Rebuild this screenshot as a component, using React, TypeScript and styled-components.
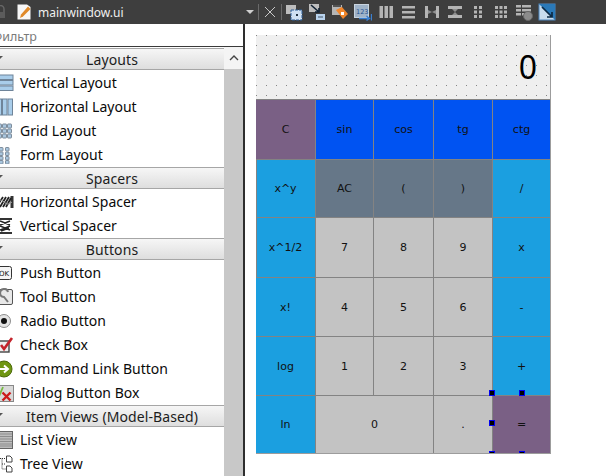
import React from "react";
import styled, { createGlobalStyle } from "styled-components";

const Global = createGlobalStyle`
  html, body { margin: 0; padding: 0; background: #fff; }
  #root { width: 606px; height: 476px; }
`;

const Page = styled.div`
  width: 606px;
  height: 476px;
  overflow: hidden;
  display: flex;
  flex-direction: column;
  font-family: "Noto Sans", "Open Sans", sans-serif;
`;

const Toolbar = styled.header`
  flex: 0 0 24px;
  height: 24px;
  background: #3e3e3e;
  display: flex;
  align-items: center;
  color: #f0f0f0;
`;

const Lock = styled.svg`
  width: 7px;
  height: 14px;
  margin-right: 10px;
`;

const Title = styled.span`
  font-size: 12px;
  margin-left: 7px;
  width: 208px;
  white-space: nowrap;
`;

const Caret = styled.span`
  width: 0;
  height: 0;
  border-left: 4px solid transparent;
  border-right: 4px solid transparent;
  border-top: 4px solid #cfcfcf;
`;

const ToolSep = styled.span<{ $left: number; $right: number }>`
  width: 1px;
  height: 16px;
  background: #6a6a6a;
  margin: 0 ${(p) => p.$right}px 0 ${(p) => p.$left}px;
`;

const CloseIcon = styled.svg`
  width: 12px;
  height: 12px;
  flex: none;
`;

const ToolIcon = styled.svg`
  width: 18px;
  height: 18px;
  flex: none;
  margin-right: 5px;
`;

const Main = styled.main`
  flex: 1;
  min-height: 0;
  display: flex;
`;

const Sidebar = styled.aside`
  flex: 0 0 245px;
  border-right: 2px solid #2e2e2e;
  box-sizing: border-box;
  display: flex;
  flex-direction: column;
  overflow: hidden;
`;

const Filter = styled.div`
  flex: 0 0 23px;
  height: 23px;
  min-height: 0;
  overflow: hidden;
  box-sizing: border-box;
  border-bottom: 1px solid #3a3a3a;
  font-size: 12.5px;
  line-height: 25px;
  color: #7a7a7a;
  margin-left: -8px;
  white-space: nowrap;
`;

const BoxRow = styled.div`
  flex: 1;
  min-height: 0;
  display: flex;
`;

const List = styled.div`
  flex: 0 0 224px;
  overflow: hidden;
  padding-top: 1px;
`;

const Scrollbar = styled.div`
  flex: 0 0 19px;
  background: #c8c8c8;
  display: flex;
  flex-direction: column;
`;

const ScrollUp = styled.div`
  flex: 0 0 22px;
  background: #f4f4f4;
  display: flex;
  align-items: center;
  justify-content: center;
`;

const SectionHeader = styled.div`
  position: relative;
  height: 22px;
  box-sizing: border-box;
  border-top: 1px solid #a6a6a6;
  border-bottom: 1px solid #a6a6a6;
  background: linear-gradient(#f6f6f6, #dedede);
  text-align: center;
  font-size: 14px;
  letter-spacing: 0.1px;
  line-height: 21px;
  color: #1c1c1c;
  white-space: nowrap;
  &::before {
    content: "";
    position: absolute;
    left: -3px;
    top: 7px;
    border-left: 3px solid transparent;
    border-right: 3px solid transparent;
    border-top: 3px solid #555;
  }
`;

const Section = styled.section`
  margin-bottom: 1px;
`;

const Item = styled.div`
  height: 24px;
  display: flex;
  align-items: center;
  font-size: 14px;
  line-height: 24px;
  color: #0a0a0a;
  white-space: nowrap;
  padding-top: 1px;
  box-sizing: border-box;
`;

const ItemIcon = styled.svg`
  width: 18px;
  height: 18px;
  flex: none;
  margin-left: -4px;
  margin-right: 6px;
`;

const Canvas = styled.div`
  flex: 1;
  background: #fff;
  padding: 11px 0 0 11px;
`;

const Form = styled.div`
  position: relative;
  width: 295px;
  height: 419px;
  border-right: 1px solid #9c9c9c;
  border-bottom: 1px solid #9c9c9c;
  box-sizing: border-box;
  display: flex;
  flex-direction: column;
`;

const Display = styled.div`
  flex: 0 0 63px;
  box-sizing: border-box;
  background-color: #efefef;
  background-image: radial-gradient(circle at 0.5px 0.5px, #858585 0.5px, transparent 0.5px);
  background-size: 10px 10px;
  text-align: right;
  padding-right: 13px;
  font-size: 32px;
  font-weight: 400;
  line-height: 64px;
  color: #000;
`;

const Keys = styled.div`
  display: grid;
  grid-template-columns: 59px 57px 59px 58px 1fr;
  grid-template-rows: 59px 57px 59px 58px 58px 1fr;
  gap: 1px;
  flex: 1;
  background: #838383;
  padding-top: 1px;
`;

const palette = {
  purple: "#7a6085",
  blue: "#0053f2",
  sky: "#1b9fe0",
  slate: "#667788",
  grey: "#c3c3c3",
};

const Key = styled.button<{ $tone: keyof typeof palette; $span?: number; $edge?: boolean }>`
  all: unset;
  display: flex;
  align-items: center;
  justify-content: center;
  background: ${(p) => palette[p.$tone]};
  grid-column: span ${(p) => p.$span ?? 1};
  font-family: "DejaVu Sans", sans-serif;
  font-size: 11px;
  color: #111;
  box-shadow: ${(p) => (p.$edge ? "inset 1px 0 0 #838383" : "none")};
`;

const Selection = styled.div`
  position: absolute;
  inset: 0;
  overflow: hidden;
  pointer-events: none;
`;

const Handle = styled.span<{ $x: number; $y: number }>`
  position: absolute;
  left: ${(p) => p.$x}px;
  top: ${(p) => p.$y}px;
  width: 6px;
  height: 6px;
  box-sizing: border-box;
  background: #000;
  border: 1px solid #0000f0;
`;

const keys: { t: string; c: keyof typeof palette; s?: number; e?: boolean }[] = [
  { t: "C", c: "purple" }, { t: "sin", c: "blue" }, { t: "cos", c: "blue" }, { t: "tg", c: "blue" }, { t: "ctg", c: "blue" },
  { t: "x^y", c: "sky", e: true }, { t: "AC", c: "slate" }, { t: "(", c: "slate" }, { t: ")", c: "slate" }, { t: "/", c: "sky" },
  { t: "x^1/2", c: "sky", e: true }, { t: "7", c: "grey" }, { t: "8", c: "grey" }, { t: "9", c: "grey" }, { t: "x", c: "sky" },
  { t: "x!", c: "sky" }, { t: "4", c: "grey" }, { t: "5", c: "grey" }, { t: "6", c: "grey" }, { t: "-", c: "sky" },
  { t: "log", c: "sky" }, { t: "1", c: "grey" }, { t: "2", c: "grey" }, { t: "3", c: "grey" }, { t: "+", c: "sky" },
  { t: "ln", c: "sky" }, { t: "0", c: "grey", s: 2 }, { t: ".", c: "grey" }, { t: "=", c: "purple" },
];

const handles = [
  [233, 355], [263, 355], [233, 385], [233, 416], [263, 416],
];

/* ---------- palette icons ---------- */
const V = { viewBox: "0 0 18 18" };

const IconVLayout = () => (
  <ItemIcon {...V}>
    {[1, 6.5, 12].map((y) => (
      <rect key={y} x="1" y={y} width="16" height="4.5" fill="#a9cdea" stroke="#6f8499" />
    ))}
  </ItemIcon>
);
const IconHLayout = () => (
  <ItemIcon {...V}>
    {[1, 6.5, 12].map((x) => (
      <rect key={x} x={x} y="1" width="4.5" height="16" fill="#a9cdea" stroke="#6f8499" />
    ))}
  </ItemIcon>
);
const cells = (cols: number[], rows: number[], s: number) =>
  cols.flatMap((x) =>
    rows.map((y) => <rect key={`${x}-${y}`} x={x} y={y} width={s} height={s} rx="0.6" fill="#a9c6de" stroke="#7d8c9b" />)
  );
const IconGrid = () => <ItemIcon {...V}>{cells([1.5, 6.5, 11.5], [2, 7, 12], 4)}</ItemIcon>;
const IconForm = () => <ItemIcon {...V}>{cells([3.5, 9.5], [1.5, 6, 10.5, 14.5], 3.5)}</ItemIcon>;
const IconHSpacer = () => (
  <ItemIcon {...V}>
    <rect x="14.5" y="3" width="3" height="12" fill="#333" />
    <path d="M1 13 L7 4 M4 14 L10 4 M7 14 L13 4 M10 14 L15 5" stroke="#222" strokeWidth="1.8" fill="none" />
    <path d="M0 9 Q4 5 8 9 T16 9" stroke="#999" fill="none" />
  </ItemIcon>
);
const IconVSpacer = () => (
  <ItemIcon {...V}>
    <rect x="3" y="1" width="13" height="2" fill="#333" />
    <rect x="3" y="15" width="13" height="2" fill="#333" />
    <path d="M4 4 L14 8 M4 8 L14 4 M4 9 L14 13 M4 13 L14 9 M5 14 L13 11" stroke="#222" strokeWidth="1.6" fill="none" />
  </ItemIcon>
);
const IconPush = () => (
  <ItemIcon {...V}>
    <rect x="0.5" y="2.5" width="15" height="13" rx="2" fill="#f4f4f4" stroke="#333" />
    <text x="8" y="12" fontSize="7" textAnchor="middle" fontFamily="DejaVu Sans" fill="#111">OK</text>
  </ItemIcon>
);
const IconTool = () => (
  <ItemIcon {...V}>
    <rect x="2.5" y="1.5" width="14" height="15" rx="1.5" fill="#e8e8e8" stroke="#555" />
    <path d="M12 4 A4 4 0 1 0 8 9 L12 14" stroke="#777" strokeWidth="2" fill="none" />
  </ItemIcon>
);
const IconRadio = () => (
  <ItemIcon {...V}>
    <circle cx="8" cy="9" r="6.5" fill="#e4e4e4" stroke="#8e8e8e" />
    <circle cx="8" cy="9" r="3" fill="#111" />
  </ItemIcon>
);
const IconCheck = () => (
  <ItemIcon {...V}>
    <rect x="2" y="5" width="11" height="11" fill="#eee" stroke="#444" strokeWidth="1.4" />
    <path d="M5 9 L8 13 L16 2" stroke="#c4232b" strokeWidth="2.6" fill="none" />
  </ItemIcon>
);
const IconCommand = () => (
  <ItemIcon {...V}>
    <circle cx="8" cy="9" r="8" fill="#6f9612" stroke="#4c6a0a" />
    <path d="M4 9 H11 M8 5.5 L12 9 L8 12.5" stroke="#fff" strokeWidth="2" fill="none" />
  </ItemIcon>
);
const IconDialog = () => (
  <ItemIcon {...V}>
    <rect x="0.5" y="1.5" width="17" height="16" fill="#d9d9d9" stroke="#888" />
    <path d="M2 7 L4 10 L7 3" stroke="#77bb44" strokeWidth="1.8" fill="none" />
    <path d="M6.5 8.5 L14.5 16.5 M14.5 8.5 L6.5 16.5" stroke="#cc1a1a" strokeWidth="2.4" />
  </ItemIcon>
);
const IconList = () => (
  <ItemIcon {...V}>
    <rect x="0.5" y="0.5" width="16" height="17" fill="#bdbdbd" stroke="#666" />
    {[3, 5.5, 8, 10.5, 13, 15].map((y) => (
      <path key={y} d={`M1 ${y} H16`} stroke="#8d8d8d" />
    ))}
  </ItemIcon>
);
const IconTree = () => (
  <ItemIcon {...V}>
    <path d="M4 3.5 H9 M6 3.5 V14 H10 M6 9 H10" stroke="#333" strokeDasharray="1 1" fill="none" />
    <path d="M10.5 1 H14 L16 3 V7 H10.5 Z M10.5 11 H14 L16 13 V17 H10.5 Z" fill="#fff" stroke="#444" />
  </ItemIcon>
);

const sections: { title: string; items: [React.ComponentType, string][] }[] = [
  { title: "Layouts", items: [[IconVLayout, "Vertical Layout"], [IconHLayout, "Horizontal Layout"], [IconGrid, "Grid Layout"], [IconForm, "Form Layout"]] },
  { title: "Spacers", items: [[IconHSpacer, "Horizontal Spacer"], [IconVSpacer, "Vertical Spacer"]] },
  { title: "Buttons", items: [[IconPush, "Push Button"], [IconTool, "Tool Button"], [IconRadio, "Radio Button"], [IconCheck, "Check Box"], [IconCommand, "Command Link Button"], [IconDialog, "Dialog Button Box"]] },
  { title: "Item Views (Model-Based)", items: [[IconList, "List View"], [IconTree, "Tree View"]] },
];

const G = "#b4b4b4";
const App = () => (
  <Page>
    <Global />
    <Toolbar>
      <Lock viewBox="0 0 7 14">
        <path d="M-3 7 V4 A3.5 3.5 0 0 1 4 4 V7" stroke="#666" strokeWidth="1.5" fill="none" />
        <rect x="-4" y="7" width="9" height="6" fill="#5c5c5c" />
      </Lock>
      <svg width="14" height="16" viewBox="0 0 14 16">
        <path d="M0.5 0.5 H10 L13.5 3 V15.5 H0.5 Z" fill="#f7f7f7" />
        <path d="M3 14 L4 10.5 L11 2.5 L13.5 5 L6 12.5 Z" fill="#e08a2a" />
      </svg>
      <Title>mainwindow.ui</Title>
      <Caret />
      <ToolSep $left={4} $right={5} />
      <CloseIcon viewBox="0 0 12 12">
        <path d="M1 1 L11 11 M11 1 L1 11" stroke="#c8c8c8" strokeWidth="1" />
      </CloseIcon>
      <ToolSep $left={5} $right={3} />
      <ToolIcon viewBox="0 0 18 18">
        <rect x="1" y="2" width="10" height="9" fill="#bdbdbd" />
        <rect x="6" y="7" width="11" height="10" fill="#cfe0f2" stroke="#2f5f97" strokeDasharray="3 1" />
        <rect x="11" y="11" width="2" height="2" fill="#234" />
      </ToolIcon>
      <ToolIcon viewBox="0 0 18 18">
        <rect x="1" y="1" width="10" height="8" fill="#bdbdbd" />
        <path d="M3 2 L11 9 M11 5 V9 H7" stroke="#123" strokeWidth="1.6" fill="none" />
        <rect x="8" y="11" width="9" height="6" fill="#b8d2ec" />
        <path d="M10 14 H15" stroke="#456" />
      </ToolIcon>
      <ToolIcon viewBox="0 0 18 18">
        <rect x="1" y="2" width="10" height="10" fill="#b5b5b5" />
        <path d="M2 3 H10" stroke="#333" strokeWidth="1.5" />
        <path d="M5 7 L11 4 L17 11 L12 16 Z" fill="#f1862b" />
        <rect x="10" y="9" width="3" height="3" fill="#fff" />
      </ToolIcon>
      <ToolIcon viewBox="0 0 18 18">
        <rect x="0.5" y="1.5" width="14" height="13" fill="#9fb3c8" stroke="#c9d4df" />
        <text x="2" y="11" fontSize="6.5" fontFamily="DejaVu Sans" fill="#1e4f8f">123</text>
        <path d="M5 15.5 H15 M12.5 13 L15.5 15.5 L12.5 17.5 M17.5 11 V17.5" stroke="#3a7fd0" strokeWidth="1.3" fill="none" />
      </ToolIcon>
      <ToolIcon viewBox="0 0 18 18">
        {[2.5, 7.5, 12.5].map((x) => <rect key={x} x={x} y="3" width="3.5" height="12" fill={G} />)}
      </ToolIcon>
      <ToolIcon viewBox="0 0 18 18">
        {[3, 8, 13].map((y) => <rect key={y} x="2" y={y} width="13" height="2.5" fill={G} />)}
      </ToolIcon>
      <ToolIcon viewBox="0 0 18 18">
        <rect x="2" y="3" width="3" height="12" fill={G} />
        <rect x="13" y="3" width="3" height="12" fill={G} />
        <path d="M5 7 L9 9 L13 7 V11 L9 9 L5 11 Z" fill="#8f8f8f" />
      </ToolIcon>
      <ToolIcon viewBox="0 0 18 18">
        <rect x="2" y="3" width="14" height="3" fill={G} />
        <rect x="2" y="12" width="14" height="3" fill={G} />
        <path d="M6 6 L9 9 L12 6 Z M6 12 L9 9 L12 12 Z" fill="#8f8f8f" />
      </ToolIcon>
      <ToolIcon viewBox="0 0 18 18">
        {[5, 10].flatMap((x) => [3, 7.5, 12].map((y) => <rect key={`${x}${y}`} x={x} y={y} width="3" height="3" fill={G} />))}
      </ToolIcon>
      <ToolIcon viewBox="0 0 18 18">
        {[3, 7.5, 12].flatMap((x) => [3, 7.5, 12].map((y) => <rect key={`${x}${y}`} x={x} y={y} width="3" height="3" fill={G} />))}
      </ToolIcon>
      <ToolIcon viewBox="0 0 18 18">
        {[2, 6, 10].map((y) => <rect key={y} x="1" y={y} width="5" height="2.5" fill={G} />)}
        {[2, 6, 10].map((y) => <rect key={`r${y}`} x="7" y={y} width="9" height="2.5" fill={G} />)}
        <circle cx="13" cy="13" r="4.5" fill="#8b8b8b" stroke="#666" />
      </ToolIcon>
      <ToolIcon viewBox="0 0 18 18">
        <rect x="1" y="1" width="16" height="16" fill="#c9dced" stroke="#4f86bd" />
        <path d="M1 1 L17 17 V1 Z" fill="#2a79b8" />
        <path d="M4 4 L14 14 M14 9 V14 H9" stroke="#0c2a44" strokeWidth="1.7" fill="none" />
      </ToolIcon>
    </Toolbar>
    <Main>
      <Sidebar>
        <Filter>Фильтр</Filter>
        <BoxRow>
          <List>
            {sections.map((s) => (
              <Section key={s.title}>
                <SectionHeader>{s.title}</SectionHeader>
                {s.items.map(([Icon, label]) => (
                  <Item key={label}>
                    <Icon />
                    {label}
                  </Item>
                ))}
              </Section>
            ))}
          </List>
          <Scrollbar>
            <ScrollUp>
              <svg width="10" height="6" viewBox="0 0 10 6">
                <path d="M1 5 L5 1 L9 5" stroke="#444" strokeWidth="1.4" fill="none" />
              </svg>
            </ScrollUp>
          </Scrollbar>
        </BoxRow>
      </Sidebar>
      <Canvas>
        <Form>
          <Display>0</Display>
          <Keys>
            {keys.map((k) => (
              <Key key={k.t} $tone={k.c} $span={k.s} $edge={k.e}>
                {k.t}
              </Key>
            ))}
          </Keys>
          <Selection>
            {handles.map(([x, y]) => (
              <Handle key={`${x}-${y}`} $x={x} $y={y} />
            ))}
          </Selection>
        </Form>
      </Canvas>
    </Main>
  </Page>
);

export default App;
